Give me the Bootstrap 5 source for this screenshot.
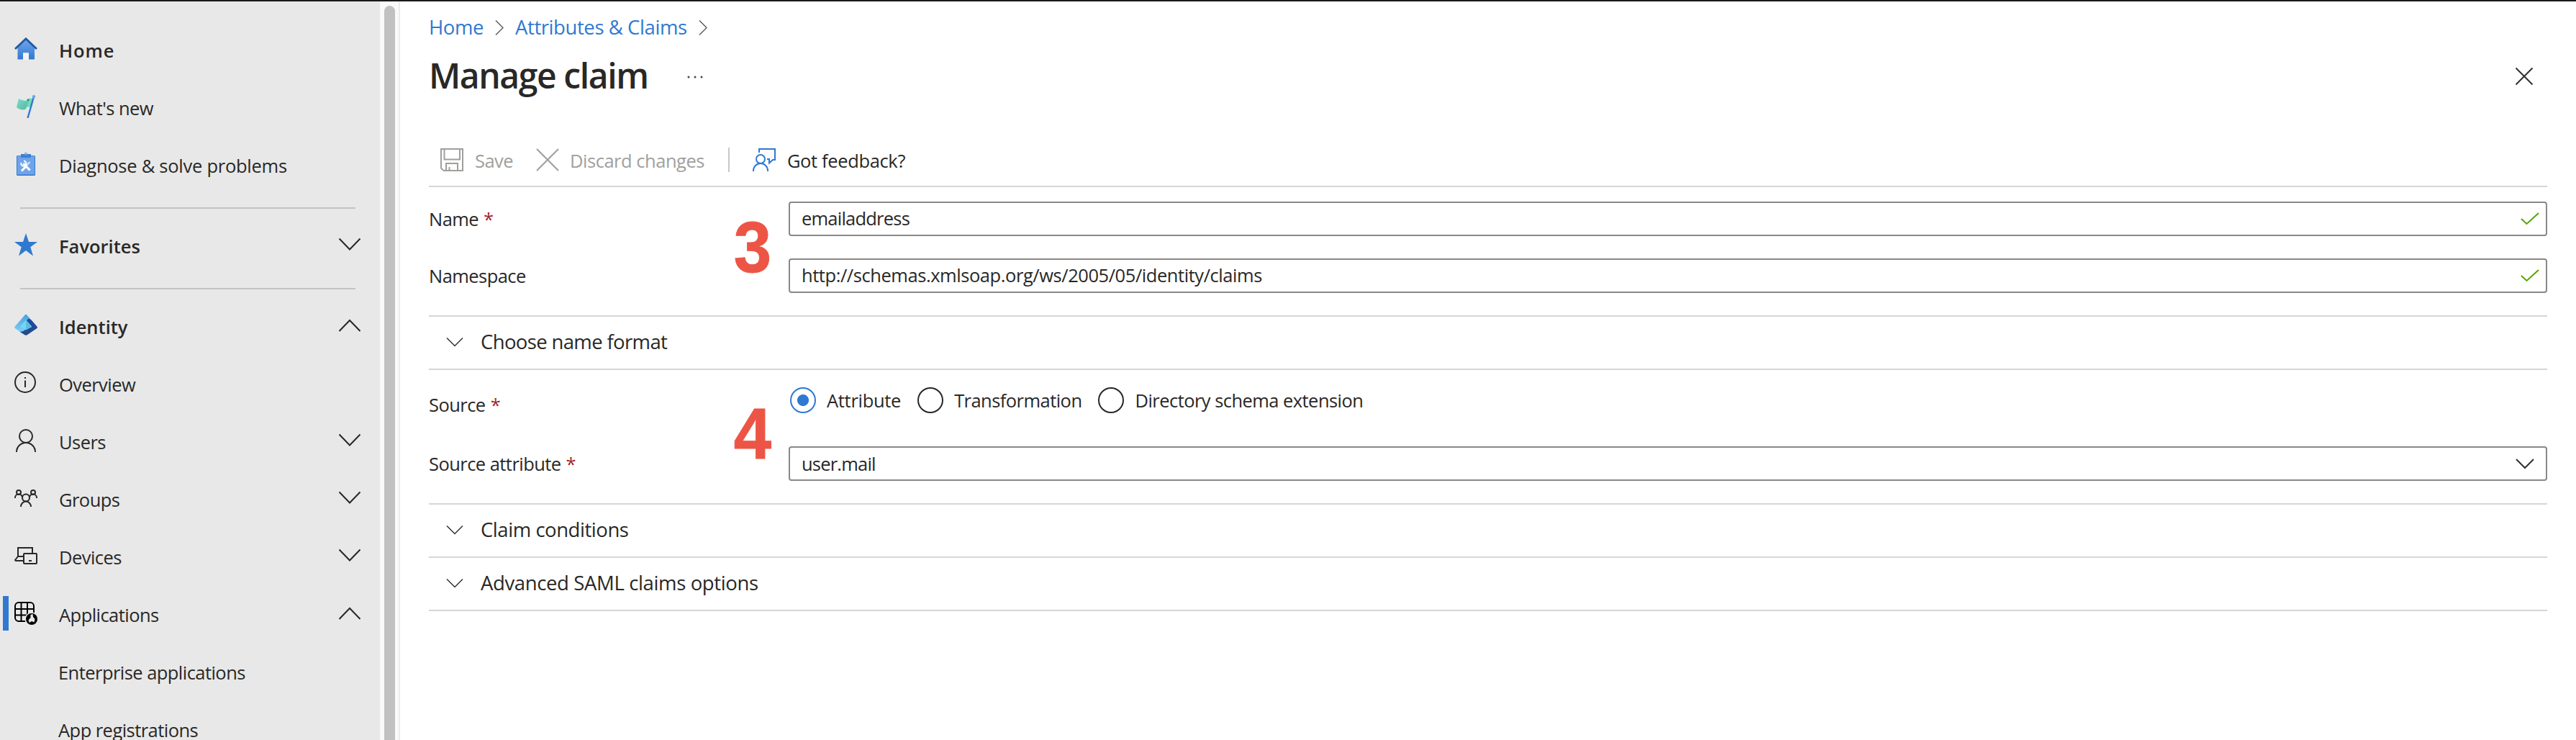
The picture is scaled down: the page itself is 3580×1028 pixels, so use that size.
<!DOCTYPE html>
<html lang="en">
<head>
<meta charset="utf-8">
<title>Manage claim</title>
<link href="https://cdn.jsdelivr.net/npm/bootstrap@5.3.0/dist/css/bootstrap.min.css" rel="stylesheet">
<style>
  body { font-family: "Open Sans", "Noto Sans", sans-serif; font-size: 25.5px; letter-spacing: -.55px; line-height: 36px; color: #292827; height: 1028px; border-top: 2px solid #1b1a19; }
  svg { fill: none; flex-shrink: 0; display: block; }
  .side-nav { width: 528px; background: #e8e8e8; padding-top: 28px; }
  .side-nav .nav-row { height: 80px; padding: 0 26px 0 20px; color: #292827; flex-shrink: 0; }
  .nav-row svg { margin-bottom: 4px; stroke: #292827; stroke-width: 2; }
  .nav-row .nav-text { margin-left: 30px; }
  .nav-row.sub-row { padding-left: 81px; }
  .heading-row { font-weight: 600; letter-spacing: 0; }
  .active-row { box-shadow: none; background: linear-gradient(#3079d1, #3079d1) 4px 14px / 8px 48px no-repeat; }
  .side-rule { height: 2px; background: #c3c3c3; margin: 18px 34px 12px 28px; flex-shrink: 0; }
  .scroll-track { width: 28px; background: #fafafa; border-right: 2px solid #ececec; padding: 6px 5px 0 6px; }
  .scroll-thumb { background: #c1c1c1; border-radius: 8px 8px 0 0; }
  .blade { padding: 0 40px; }
  .crumbs { height: 72px; font-size: 27.5px; letter-spacing: -.42px; }
  .crumbs a { color: #3079d1; }
  .title-row { height: 62px; margin-bottom: 50px; }
  .title-row h1 { font-size: 48px; letter-spacing: -1.4px; line-height: 62px; }
  .command-bar { height: 74px; border-bottom: 2px solid #d6d6d6; margin-bottom: 20px; padding-left: 16px; }
  .command-bar span { padding-top: 1px; }
  .off { color: #a19f9d; }
  .v-rule { width: 2px; height: 34px; background: #c8c8c8; }
  .form-line { height: 48px; margin-bottom: 31px; }
  .field-label { width: 500px; flex-shrink: 0; }
  .req { color: #a4262c; margin-left: 7px; }
  .field-box { border: 2px solid #8a8886; border-radius: 4px; }
  .field-box .form-control { font-size: 25.5px; letter-spacing: inherit; line-height: 36px; color: #292827; padding: 0 0 2px 16px; }
  .fold { height: 74px; border-bottom: 2px solid #d6d6d6; padding: 0 0 2px 24px; font-size: 27.5px; }
  .fold.first-fold { height: 76px; border-top: 2px solid #d6d6d6; }
  .source-line { height: 48px; margin: 18px 0 40px; }
  .pick .form-check-input { width: 36px; height: 36px; margin: 0 15px 0 0; float: none; border: 2px solid #292827; background-color: #fff; }
  .pick .form-check-input:checked { border-color: #3079d1; background: radial-gradient(circle, #3079d1 7.6px, #fff 8.4px); }
  .step-mark { position: absolute; left: 1018px; font: bold 100px/100px "Liberation Sans", sans-serif; letter-spacing: 0; color: #ec5545; transform: scaleX(.94); -webkit-text-stroke: 1px #ec5545; }
</style>
</head>
<body class="d-flex overflow-hidden position-relative bg-white">

<nav class="side-nav d-flex flex-column flex-shrink-0 overflow-hidden">
  <a class="nav-row heading-row d-flex align-items-center text-decoration-none" href="#">
    <svg width="32" height="32" viewBox="0 0 32 32"><defs><linearGradient id="gh" x2="0" y2="1"><stop stop-color="#76a5ed"/><stop offset="1" stop-color="#2f7ad2"/></linearGradient></defs><path d="M16 2 28 14V30.500H20V21.500H12V30.500H4.500V14Z" fill="url(#gh)" stroke="none"/><path d="M12 21.500h8V31h-8z" fill="#f4f4f4" stroke="none"/><path d="M1 16 16 1.800 31 16" stroke="#21599f" stroke-width="2.800"/></svg>
    <span class="nav-text" style="letter-spacing:.9px">Home</span></a>
  <a class="nav-row d-flex align-items-center text-decoration-none" href="#">
    <svg width="32" height="32" viewBox="0 0 32 32"><defs><linearGradient id="gf" x2="1" y2="1"><stop stop-color="#76dfc5"/><stop offset="1" stop-color="#58b5a3"/></linearGradient></defs><g stroke="none"><path d="M17 6Q20 3.500 27 5L24 17.500Q20 16 17 17Z" fill="#6cdcc0"/><path d="M6 5Q12 9 20 7.500L16 19.500Q10 22.500 3 17Z" fill="url(#gf)"/><path d="M17.500 7Q19 5 20.500 6L19.500 8.500Z" fill="#32665c"/></g><path d="M26.500 4 18.500 32" stroke="#3079d1" stroke-width="2.400"/><circle cx="27" cy="2.300" r="2.200" fill="#70a3ea" stroke="none"/></svg>
    <span class="nav-text">What's new</span></a>
  <a class="nav-row d-flex align-items-center text-decoration-none" href="#">
    <svg width="32" height="32" viewBox="0 0 32 32"><g stroke="none"><rect x="3" y="4" width="26" height="28" rx="1.500" fill="#3079d1"/><rect x="4" y="4.500" width="24" height="26" fill="#70a3ea"/><path d="M9 2h14v5H9z" fill="#3b80d3"/></g><circle cx="16" cy="1.800" r="1.500" stroke="#70a3ea" stroke-width="1.200"/><path d="M10.500 24.500 21.500 13" stroke="#dbe8fb" stroke-width="2"/><path d="M10 25.500 15.500 20" stroke="#fff" stroke-width="3"/><path d="M12.500 15 21.500 24.500" stroke="#fff" stroke-width="3.200"/><path d="M9.500 13.800A3.600 3.600 0 1 0 13 11.500" stroke="#fff" stroke-width="2"/></svg>
    <span class="nav-text" style="letter-spacing:-.26px">Diagnose &amp; solve problems</span></a>
  <div class="side-rule"></div>
  <a class="nav-row heading-row d-flex align-items-center text-decoration-none" href="#">
    <svg width="32" height="32" viewBox="0 0 32 32"><path d="M16 0 20 12H32L22.300 19.300 26 31.500 16 24 6 31.500 9.700 19.300 0 12H12Z" fill="#3079d1" stroke="none"/></svg>
    <span class="nav-text">Favorites</span>
    <svg class="ms-auto" width="32" height="32" viewBox="0 0 32 32"><path d="M1.500 7.500 16 22.500 30.500 7.500"/></svg></a>
  <div class="side-rule"></div>
  <a class="nav-row heading-row d-flex align-items-center text-decoration-none" href="#">
    <svg width="32" height="32" viewBox="0 0 32 32"><defs><linearGradient id="gi" x2="0" y2="1"><stop stop-color="#4b9fe0"/><stop offset="1" stop-color="#83dbfb"/></linearGradient><linearGradient id="gj" x2="0" y2="1"><stop stop-color="#1c4ba4"/><stop offset="1" stop-color="#29488a"/></linearGradient></defs><g stroke="none"><path d="M14.500 1.700Q16 0 17.500 1.700L31.300 17.500Q32.500 19 31 20.300L18 29Q16 30.500 14 29L1 20.300Q-.500 19 .700 17.500Z" fill="url(#gi)"/><path d="M17 9 20 6.500 23.500 8.500 31.300 17.500Q32.500 19 31 20.300L18 29Q16 30.500 14 29L7 24.500Q12 25.500 15 22L24 18.500Z" fill="url(#gj)"/><path d="M16 8.500 24 17.500 16 22.500 8 17.500Z" fill="#76d6f3"/><path d="M16 8.500 24 17.500 16 22.500Z" fill="#5abede"/></g></svg>
    <span class="nav-text">Identity</span>
    <svg class="ms-auto" width="32" height="32" viewBox="0 0 32 32"><path d="M1.500 24 16 9 30.500 24"/></svg></a>
  <a class="nav-row d-flex align-items-center text-decoration-none" href="#">
    <svg width="32" height="32" viewBox="0 0 32 32"><circle cx="15" cy="15" r="14"/><path d="M15 12.500V22M15 8v2"/></svg>
    <span class="nav-text">Overview</span></a>
  <a class="nav-row d-flex align-items-center text-decoration-none" href="#">
    <svg width="32" height="32" viewBox="0 0 32 32"><circle cx="16" cy="10" r="9"/><path d="M3 32a13 13 0 0 1 26 0"/></svg>
    <span class="nav-text">Users</span>
    <svg class="ms-auto" width="32" height="32" viewBox="0 0 32 32"><path d="M1.500 7.500 16 22.500 30.500 7.500"/></svg></a>
  <a class="nav-row d-flex align-items-center text-decoration-none" href="#">
    <svg width="32" height="32" viewBox="0 0 32 32"><circle cx="16" cy="15.500" r="5"/><path d="M9 28a7 7.500 0 0 1 14 0"/><circle cx="6" cy="8" r="3"/><path d="M1 16a5 5 0 0 1 10-1"/><circle cx="26" cy="8" r="3"/><path d="M31 16a5 5 0 0 0-10-1"/></svg>
    <span class="nav-text">Groups</span>
    <svg class="ms-auto" width="32" height="32" viewBox="0 0 32 32"><path d="M1.500 7.500 16 22.500 30.500 7.500"/></svg></a>
  <a class="nav-row d-flex align-items-center text-decoration-none" href="#">
    <svg width="32" height="32" viewBox="0 0 32 32"><path d="M5 17V5H25V12"/><path d="M12 17H5L1 22Q1 23 2.500 23H12"/><rect x="13" y="13" width="18" height="14" rx="1"/><path d="M20 23h4"/></svg>
    <span class="nav-text">Devices</span>
    <svg class="ms-auto" width="32" height="32" viewBox="0 0 32 32"><path d="M1.500 7.500 16 22.500 30.500 7.500"/></svg></a>
  <a class="nav-row active-row d-flex align-items-center text-decoration-none" href="#">
    <svg width="32" height="32" viewBox="0 0 32 32"><g stroke="#000"><rect x="1" y="1" width="26" height="26" rx="5"/><path d="M9.500 1V27M18 1V27M1 10H27M1 18.500H27"/></g><circle cx="24" cy="24" r="9.500" fill="#e8e8e8" stroke="none"/><circle cx="24" cy="24" r="8" fill="#000" stroke="none"/><path d="M22.500 18 25.500 17 26 21 28.500 24 27.500 28.500 24 27 21 29 19.500 25.500 22.500 22Z" fill="#e8e8e8" stroke="none"/></svg>
    <span class="nav-text">Applications</span>
    <svg class="ms-auto" width="32" height="32" viewBox="0 0 32 32"><path d="M1.500 24 16 9 30.500 24"/></svg></a>
  <a class="nav-row sub-row d-flex align-items-center text-decoration-none" href="#">Enterprise applications</a>
  <a class="nav-row sub-row d-flex align-items-center text-decoration-none" href="#">App registrations</a>
</nav>
<div class="scroll-track flex-shrink-0"><div class="scroll-thumb h-100"></div></div>

<main class="blade flex-grow-1">
  <div class="crumbs d-flex align-items-center">
    <a class="text-decoration-none" href="#">Home</a>
    <svg class="mx-3" width="12" height="22" viewBox="0 0 12 22"><path d="M1 1.500 11 11.500 1 21.500" stroke="#605e5c" stroke-width="1.500"/></svg>
    <a class="text-decoration-none" href="#">Attributes &amp; Claims</a>
    <svg class="mx-3" width="12" height="22" viewBox="0 0 12 22"><path d="M1 1.500 11 11.500 1 21.500" stroke="#605e5c" stroke-width="1.500"/></svg>
  </div>
  <div class="title-row d-flex align-items-center">
    <h1 class="fw-semibold mb-0">Manage claim</h1>
    <svg class="mt-1" style="margin-left:54px" width="22" height="6" viewBox="0 0 22 6"><g fill="#484644"><circle cx="2" cy="3" r="1.500"/><circle cx="11" cy="3" r="1.500"/><circle cx="20" cy="3" r="1.500"/></g></svg>
    <svg class="ms-auto me-3" width="32" height="32" viewBox="0 0 32 32"><path d="M4.500 5.500 27.500 28.500M27.500 5.500 4.500 28.500" stroke="#323130" stroke-width="2"/></svg>
  </div>
  <div class="command-bar d-flex align-items-center">
    <svg width="32" height="32" viewBox="0 0 32 32"><g stroke="#a19f9d" stroke-width="2"><path d="M1 1H31V31H4.500L1 27.500Z"/><path d="M5.500 1V15.500H27V1M8 31V21H24V31M12.500 31V26"/></g></svg>
    <span class="off" style="margin-left:16px">Save</span>
    <svg style="margin-left:32px" width="32" height="32" viewBox="0 0 32 32"><path d="M1 1 31 31M31 1 1 31" stroke="#a19f9d" stroke-width="2"/></svg>
    <span class="off" style="margin-left:15px;letter-spacing:-.48px">Discard changes</span>
    <div class="v-rule" style="margin-left:33px;margin-right:32px"></div>
    <svg width="32" height="32" viewBox="0 0 32 32"><g stroke="#3079d1" stroke-width="2"><circle cx="11" cy="15" r="6"/><path d="M1 32v-1a10 10 0 0 1 20 0v1M9 6V1H31V16H28L23 20.500V15H20"/></g></svg>
    <span style="margin-left:16px;letter-spacing:-.36px">Got feedback?</span>
  </div>

  <div class="form-line d-flex">
    <label class="field-label align-self-center">Name<span class="req">*</span></label>
    <div class="field-box d-flex align-items-center flex-grow-1" style="letter-spacing:-.78px">
      <input class="form-control border-0 bg-transparent shadow-none" value="emailaddress">
      <svg class="me-2" width="32" height="24" viewBox="0 0 32 24"><path d="M6 12 13.500 19 30 4" stroke="#57a300" stroke-width="2"/></svg>
    </div>
  </div>
  <div class="form-line d-flex">
    <label class="field-label align-self-center">Namespace</label>
    <div class="field-box d-flex align-items-center flex-grow-1" style="letter-spacing:-.44px">
      <input class="form-control border-0 bg-transparent shadow-none" value="http://schemas.xmlsoap.org/ws/2005/05/identity/claims">
      <svg class="me-2" width="32" height="24" viewBox="0 0 32 24"><path d="M6 12 13.500 19 30 4" stroke="#57a300" stroke-width="2"/></svg>
    </div>
  </div>
  <div class="fold first-fold d-flex align-items-center" style="letter-spacing:-.64px">
    <svg width="24" height="14" viewBox="0 0 24 14"><path d="M1 1.500 12 12.500 23 1.500" stroke="#323130" stroke-width="1.500"/></svg>
    <span class="ms-4">Choose name format</span>
  </div>

  <div class="source-line d-flex">
    <label class="field-label" style="padding-top:12px">Source<span class="req">*</span></label>
    <div class="d-flex align-items-center">
      <div class="pick d-flex align-items-center" style="margin:0 23px 0 2px"><input class="form-check-input" type="radio" name="src" id="s1" checked><label for="s1" style="letter-spacing:-.3px">Attribute</label></div>
      <div class="pick d-flex align-items-center" style="margin-right:23px"><input class="form-check-input" type="radio" name="src" id="s2"><label for="s2">Transformation</label></div>
      <div class="pick d-flex align-items-center"><input class="form-check-input" type="radio" name="src" id="s3"><label for="s3">Directory schema extension</label></div>
    </div>
  </div>
  <div class="form-line d-flex">
    <label class="field-label align-self-center">Source attribute<span class="req">*</span></label>
    <div class="field-box d-flex align-items-center flex-grow-1" style="letter-spacing:-.8px">
      <input class="form-control border-0 bg-transparent shadow-none pb-0" value="user.mail" role="combobox">
      <svg style="margin-right:16px" width="26" height="16" viewBox="0 0 26 16"><path d="M1 2 13 14 25 2" stroke="#323130" stroke-width="2"/></svg>
    </div>
  </div>
  <div class="fold first-fold d-flex align-items-center" style="letter-spacing:-.45px">
    <svg width="24" height="14" viewBox="0 0 24 14"><path d="M1 1.500 12 12.500 23 1.500" stroke="#323130" stroke-width="1.500"/></svg>
    <span class="ms-4">Claim conditions</span>
  </div>
  <div class="fold d-flex align-items-center" style="letter-spacing:-.37px">
    <svg width="24" height="14" viewBox="0 0 24 14"><path d="M1 1.500 12 12.500 23 1.500" stroke="#323130" stroke-width="1.500"/></svg>
    <span class="ms-4">Advanced SAML claims options</span>
  </div>
</main>

<div class="step-mark" style="top:291px">3</div>
<div class="step-mark" style="top:550px">4</div>
<script src="https://cdn.jsdelivr.net/npm/bootstrap@5.3.0/dist/js/bootstrap.bundle.min.js"></script>
</body>
</html>
